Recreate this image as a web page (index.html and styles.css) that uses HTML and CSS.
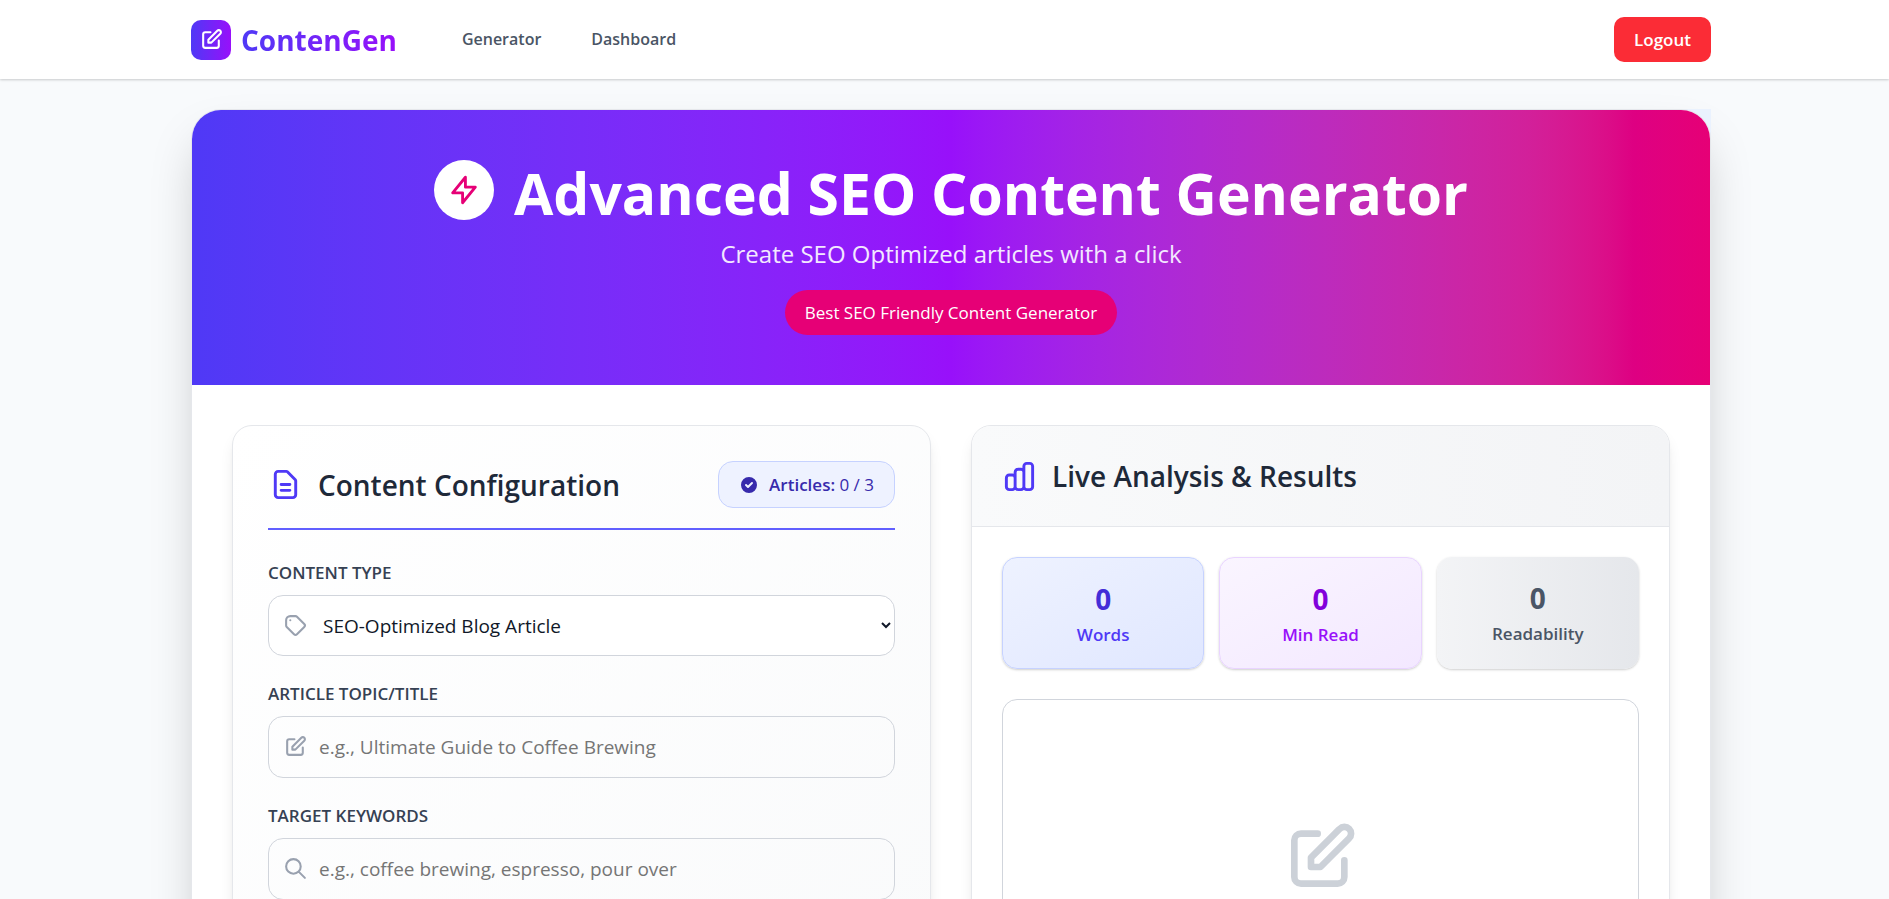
FILE: index.html
```html
<!DOCTYPE html>
<html lang="en">
<head>
<meta charset="utf-8">
<meta name="viewport" content="width=device-width, initial-scale=1">
<title>ContenGen</title>
<link rel="stylesheet" href="styles.css">
</head>
<body>
<svg class="sprite" aria-hidden="true">
  <symbol id="edit" viewBox="0 0 24 24"><path d="M11 5H6a2 2 0 00-2 2v11a2 2 0 002 2h11a2 2 0 002-2v-5m-1.414-9.414a2 2 0 112.828 2.828L11.828 15H9v-2.828l8.586-8.586z"/></symbol>
</svg>
<header class="topbar">
  <div class="shell topbar-row">
    <a class="brand" href="#">
      <span class="brand-mark"><svg class="icon icon-f"><use href="#edit"/></svg></span>
      <span class="brand-name">ContenGen</span>
    </a>
    <nav class="nav">
      <a href="#">Generator</a>
      <a href="#">Dashboard</a>
    </nav>
    <button class="logout" type="button">Logout</button>
  </div>
</header>
<main class="shell">
  <div class="frame">
    <div class="sheet">
      <section class="hero">
        <div class="hero-title">
          <span class="hero-badge"><svg class="icon icon-xl" viewBox="0 0 24 24"><path d="M13 10V3L4 14h7v7l9-11h-7z"/></svg></span>
          <h1>Advanced SEO Content Generator</h1>
        </div>
        <p class="hero-sub">Create SEO Optimized articles with a click</p>
        <span class="pill">Best SEO Friendly Content Generator</span>
      </section>
      <div class="columns">
        <section class="card config">
          <div class="config-head">
            <h2><svg class="icon icon-h" viewBox="0 0 24 24"><path d="M9 12h6m-6 4h6m2 5H7a2 2 0 01-2-2V5a2 2 0 012-2h5.586a1 1 0 01.707.293l5.414 5.414a1 1 0 01.293.707V19a2 2 0 01-2 2z"/></svg>Content Configuration</h2>
            <div class="quota">
              <svg class="check" viewBox="0 0 20 20"><path fill-rule="evenodd" d="M10 18a8 8 0 100-16 8 8 0 000 16zm3.707-9.293a1 1 0 00-1.414-1.414L9 10.586 7.707 9.293a1 1 0 00-1.414 1.414l2 2a1 1 0 001.414 0l4-4z"/></svg>
              <span><strong>Articles:</strong> 0 / 3</span>
            </div>
          </div>
          <div class="fields">
            <div class="field">
              <label for="type">CONTENT TYPE</label>
              <div class="control">
                <svg class="icon icon-f" viewBox="0 0 24 24"><path d="M7 7h.01M7 3h5c.512 0 1.024.195 1.414.586l7 7a2 2 0 010 2.828l-7 7a2 2 0 01-2.828 0l-7-7A1.994 1.994 0 013 12V7a4 4 0 014-4z"/></svg>
                <select id="type"><option>SEO-Optimized Blog Article</option></select>
              </div>
            </div>
            <div class="field">
              <label for="topic">ARTICLE TOPIC/TITLE</label>
              <div class="control">
                <svg class="icon icon-f"><use href="#edit"/></svg>
                <input id="topic" type="text" placeholder="e.g., Ultimate Guide to Coffee Brewing">
              </div>
            </div>
            <div class="field">
              <label for="keywords">TARGET KEYWORDS</label>
              <div class="control">
                <svg class="icon icon-f" viewBox="0 0 24 24"><path d="M21 21l-6-6m2-5a7 7 0 11-14 0 7 7 0 0114 0z"/></svg>
                <input id="keywords" type="text" placeholder="e.g., coffee brewing, espresso, pour over">
              </div>
            </div>
          </div>
        </section>
        <section class="card results">
          <div class="results-head">
            <h2><svg class="icon icon-h" viewBox="0 0 24 24"><path d="M9 19v-6a2 2 0 00-2-2H5a2 2 0 00-2 2v6a2 2 0 002 2h2a2 2 0 002-2zm0 0V9a2 2 0 012-2h2a2 2 0 012 2v10m-6 0a2 2 0 002 2h2a2 2 0 002-2m0 0V5a2 2 0 012-2h2a2 2 0 012 2v14a2 2 0 01-2 2h-2a2 2 0 01-2-2z"/></svg>Live Analysis &amp; Results</h2>
          </div>
          <div class="results-body">
            <div class="stats">
              <div class="stat words"><b>0</b><span>Words</span></div>
              <div class="stat minutes"><b>0</b><span>Min Read</span></div>
              <div class="stat reading"><b>0</b><span>Readability</span></div>
            </div>
            <div class="output"><svg class="icon icon-xxl"><use href="#edit"/></svg></div>
          </div>
        </section>
      </div>
    </div>
  </div>
</main>
</body>
</html>
```
FILE: styles.css
```css
* { box-sizing: border-box; margin: 0; }

body {
  background: #f8fafc;
  color: #101828;
  font: 17px/25px "Open Sans", "Noto Sans", sans-serif;
}

.sprite { position: absolute; width: 0; height: 0; }

.icon {
  flex: none;
  fill: none;
  stroke: currentColor;
  stroke-width: 2;
  stroke-linecap: round;
  stroke-linejoin: round;
}
.icon-f { width: 25px; height: 25px; }
.icon-xl { width: 34px; height: 34px; }
.icon-h { width: 35px; height: 35px; color: #4f39f6; }
.icon-xxl { width: 80px; height: 80px; color: #ccd1d8; }

.topbar, main { padding-left: 13px; }
.shell > *, .topbar-row { max-width: 1520px; margin: 0 auto; }

.topbar {
  position: relative;
  background: #fff;
  box-shadow: 0 1px 3px rgb(0 0 0 / .1), 0 1px 2px rgb(0 0 0 / .1);
}
.topbar-row { display: flex; align-items: center; padding: 17px 0; }
.topbar-row > * { margin: 0; }
.brand { display: flex; align-items: center; gap: 10px; text-decoration: none; }
.brand-mark {
  display: grid;
  place-items: center;
  width: 40px;
  height: 40px;
  border-radius: 10px;
  background: linear-gradient(to right, #4f39f6, #9810fa);
  color: #fff;
}
.brand-name {
  font-size: 28px;
  line-height: 40px;
  font-weight: 700;
  background: linear-gradient(to right, #4f39f6, #9810fa);
  background-clip: text;
  -webkit-background-clip: text;
  color: transparent;
}
.nav { display: flex; flex: 1; gap: 50px; padding-left: 65px; }
.nav a { color: #4a5565; font-size: 16px; font-weight: 600; text-decoration: none; }
.logout {
  padding: 10px 20px;
  border: 0;
  border-radius: 10px;
  background: #fb2c36;
  color: #fff;
  font: inherit;
  font-weight: 600;
}

main { padding-top: 30px; }
.frame {
  position: relative;
  border-radius: 30px;
  box-shadow: 0 25px 50px -12px rgb(0 0 0 / .25);
}
.frame::before {
  content: "";
  position: absolute;
  top: 0;
  right: 0;
  width: 60px;
  height: 60px;
  background: #eaf2fe;
}
.sheet {
  position: relative;
  overflow: hidden;
  border: 1px solid #e5e7eb;
  border-radius: 30px;
  background: #fff;
}

.hero {
  display: flex;
  flex-direction: column;
  align-items: center;
  padding: 50px;
  background: linear-gradient(to right in oklab, #4f39f6, #9810fa 50%, #d2209a 88%, #de0082 95%, #e60076);
  color: #fff;
}
.hero-title { display: flex; gap: 20px; margin-bottom: 10px; }
.hero-badge {
  display: grid;
  place-items: center;
  width: 60px;
  height: 60px;
  border-radius: 50%;
  background: #fff;
  color: #e60076;
}
h1 { font-size: 57px; line-height: 66px; font-weight: 700; }
.hero-sub { margin-bottom: 19px; color: #f3e8ff; font-size: 24px; line-height: 35px; }
.pill { padding: 10px 20px; border-radius: 25px; background: #e60076; }

.columns {
  display: grid;
  grid-template-columns: 1fr 1fr;
  gap: 40px;
  padding: 40px;
}
.card {
  border: 1px solid #e5e7eb;
  border-radius: 20px;
  box-shadow: 0 10px 15px -3px rgb(0 0 0 / .1), 0 4px 6px -4px rgb(0 0 0 / .1);
}
h2 {
  display: flex;
  align-items: center;
  gap: 15px;
  color: #1e2939;
  font-size: 28px;
  line-height: 40px;
  font-weight: 600;
}

.config { padding: 35px; background: linear-gradient(to bottom right, #fff, #f9fafb); }
.config-head {
  display: flex;
  align-items: center;
  justify-content: space-between;
  margin-bottom: 30px;
  padding-bottom: 20px;
  border-bottom: 2px solid #615fff;
}
.quota {
  display: flex;
  align-items: center;
  gap: 10px;
  padding: 10px 20px;
  border: 1px solid #c6d2ff;
  border-radius: 15px;
  background: #eef2ff;
  color: #372aac;
}
.quota strong { font-weight: 600; }
.check { width: 20px; height: 20px; fill: currentColor; }

.fields { display: grid; gap: 25px; }
.field { display: grid; gap: 9px; }
.field label { color: #364153; line-height: 26px; font-weight: 600; }
.control { position: relative; }
.control .icon {
  position: absolute;
  top: 18px;
  left: 15px;
  color: #99a1af;
}
.control select, .control input {
  display: block;
  width: 100%;
  height: 62px;
  border: 1px solid #d1d5dc;
  border-radius: 15px;
  background: transparent;
  color: #101828;
  font: inherit;
  font-size: 19px;
}
.control input { padding: 0 15px 0 50px; }
.control select { height: 61px; padding: 0 0 0 50px; background: #fff; }
.control input::placeholder { color: #757575; }

.results { overflow: hidden; background: #fff; }
.results-head {
  padding: 30px;
  border-bottom: 1px solid #e5e7eb;
  background: linear-gradient(to right, #f9fafb, #f3f4f6);
}
.results-body { padding: 30px; }
.stats { display: grid; grid-template-columns: repeat(3, 1fr); gap: 15px; margin-bottom: 30px; }
.stat {
  display: flex;
  flex-direction: column;
  align-items: center;
  padding: 20px;
  border: 1px solid;
  border-radius: 15px;
  box-shadow: 0 1px 3px rgb(0 0 0 / .1), 0 1px 2px rgb(0 0 0 / .1);
}
.stat b { font-size: 28px; line-height: 43px; }
.stat span { line-height: 27px; font-weight: 600; }
.words { border-color: #c6d2ff; background: linear-gradient(to bottom right, #eef2ff, #e0e7ff); color: #4f39f6; }
.words b { color: #432dd7; }
.minutes { border-color: #e9d4ff; background: linear-gradient(to bottom right, #faf5ff, #f3e8ff); color: #9810fa; }
.minutes b { color: #8200db; }
.reading { border: 0; background: linear-gradient(to right, #f3f4f6, #e5e7eb); color: #4a5565; }
.output {
  display: grid;
  place-items: center;
  min-height: 316px;
  border: 1px solid #d1d5dc;
  border-radius: 15px;
}
```
